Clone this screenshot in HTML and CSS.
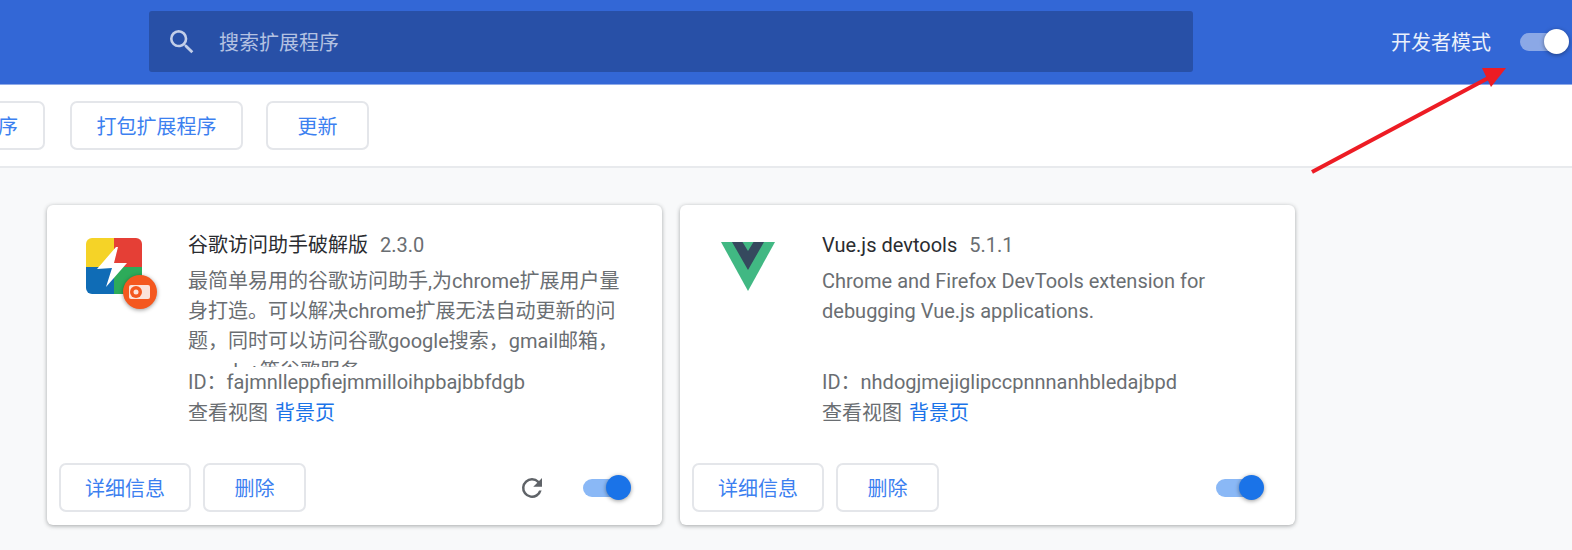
FILE: index.html
```html
<!DOCTYPE html>
<html lang="zh">
<head>
<meta charset="utf-8">
<title>扩展程序</title>
<link rel="stylesheet" href="styles.css">
</head>
<body>
<header class="top">
  <div class="search">
    <svg class="search-icon" viewBox="0 0 24 24" width="32" height="32"><path fill="currentColor" d="M15.5 14h-.79l-.28-.27A6.47 6.47 0 0 0 16 9.5 6.5 6.5 0 1 0 9.5 16c1.61 0 3.09-.59 4.23-1.57l.27.28v.79l5 4.99L20.49 19l-4.99-5zm-6 0C7.01 14 5 11.99 5 9.5S7.01 5 9.5 5 14 7.01 14 9.5 11.99 14 9.5 14z"/></svg>
    <span class="search-text">搜索扩展程序</span>
  </div>
  <div class="dev">
    <span class="dev-label">开发者模式</span>
    <span class="toggle toggle-dev"><span class="knob knob-dev"></span></span>
  </div>
</header>
<nav class="tools">
  <button class="btn btn-cut">加载已解压的扩展程序</button>
  <button class="btn btn-pack">打包扩展程序</button>
  <button class="btn btn-update">更新</button>
</nav>
<main class="cards">
  <article class="card">
    <div class="card-main">
      <div class="icon-col">
        <svg class="ext-icon" viewBox="0 0 74 64" width="74" height="64">
          <defs><clipPath id="rr"><rect x="0" y="0" width="56" height="56" rx="6"/></clipPath></defs>
          <g clip-path="url(#rr)">
            <rect x="0" y="0" width="28" height="29" fill="#f5d327"/>
            <rect x="28" y="0" width="28" height="29" fill="#e53f36"/>
            <rect x="0" y="29" width="28" height="27" fill="#0f6cb6"/>
            <rect x="28" y="29" width="28" height="27" fill="#2dab5a"/>
            <path fill="#fff" d="M30 9 L11 31 L26 30 L20 49 L41 25 L28 25 L32 9 Z"/>
          </g>
          <circle class="badge" cx="54" cy="54" r="17" fill="#f4581f"/>
          <rect x="43" y="47" width="21" height="14" rx="2" fill="#fbe3da"/>
          <circle cx="50" cy="54" r="6" fill="#f4581f"/>
          <circle cx="50" cy="54" r="2.500" fill="#fbe3da"/>
        </svg>
      </div>
      <div class="info">
        <div class="title-row"><span class="name">谷歌访问助手破解版</span><span class="version">2.3.0</span></div>
        <p class="desc">最简单易用的谷歌访问助手,为chrome扩展用户量身打造。可以解决chrome扩展无法自动更新的问题，同时可以访问谷歌google搜索，gmail邮箱，google+等谷歌服务</p>
        <div class="line">ID：fajmnlleppfiejmmilloihpbajbbfdgb</div>
        <div class="line">查看视图<a class="link">背景页</a></div>
      </div>
    </div>
    <div class="actions">
      <button class="btn btn-detail">详细信息</button>
      <button class="btn btn-del">删除</button>
      <svg class="reload" viewBox="0 0 24 24" width="30" height="30"><path fill="#5f6368" d="M17.65 6.35A7.96 7.96 0 0 0 12 4a8 8 0 1 0 7.73 10h-2.08A6 6 0 1 1 12 6c1.66 0 3.14.69 4.22 1.78L13 11h7V4l-2.35 2.35z"/></svg>
      <span class="toggle toggle-on"><span class="knob knob-on"></span></span>
    </div>
  </article>
  <article class="card">
    <div class="card-main">
      <div class="icon-col">
        <svg class="ext-icon vue-icon" viewBox="0 0 54 49" width="54" height="49">
          <path fill="#41b883" d="M0 0h54L27 49z"/>
          <path fill="#35495e" d="M11 0h10.500L27 9l5.500-9H43L27 28z"/>
        </svg>
      </div>
      <div class="info">
        <div class="title-row"><span class="name">Vue.js devtools</span><span class="version">5.1.1</span></div>
        <p class="desc">Chrome and Firefox DevTools extension for debugging Vue.js applications.</p>
        <div class="line">ID：nhdogjmejiglipccpnnnanhbledajbpd</div>
        <div class="line">查看视图<a class="link">背景页</a></div>
      </div>
    </div>
    <div class="actions">
      <button class="btn btn-detail">详细信息</button>
      <button class="btn btn-del">删除</button>
      <span class="toggle toggle-on"><span class="knob knob-on"></span></span>
    </div>
  </article>
</main>
<svg class="arrow" viewBox="0 0 1572 550" width="1572" height="550">
  <path d="M1312 172 L1492 76" stroke="#ed1c24" stroke-width="4" fill="none"/>
  <path d="M1482 68 L1506 68 L1491 87 Z" fill="#ed1c24"/>
</svg>
</body>
</html>
```
FILE: styles.css
```css
* { box-sizing: border-box; }
html, body { margin: 0; padding: 0; }
body {
  width: 1572px;
  height: 550px;
  overflow: hidden;
  position: relative;
  background: #f8f9fa;
  font-family: Roboto, "Noto Sans CJK SC", sans-serif;
  font-size: 20px;
  color: #6a6e72;
}
.top {
  height: 85px;
  background: #3367d6;
  border-bottom: 1px solid #8faae8;
  display: flex;
  align-items: flex-start;
  padding: 11px 0 0 149px;
}
.search {
  width: 1044px;
  height: 61px;
  background: #2850a7;
  border-radius: 3px;
  display: flex;
  align-items: center;
  padding-left: 17px;
  color: #b4c2e2;
}
.search-icon { flex: none; color: #c3cfe9; }
.search-text { margin-left: 21px; font-size: 20px; }
.dev {
  margin-left: 198px;
  height: 61px;
  display: flex;
  align-items: center;
  color: #eaf0fb;
  font-size: 20px;
}
.toggle {
  display: block;
  position: relative;
  width: 46px;
  height: 18px;
  border-radius: 9px;
  flex: none;
}
.toggle-dev { width: 47px; margin-left: 29px; background: #8ba8e6; }
.toggle-on { background: #8ab8f6; }
.knob {
  position: absolute;
  top: -4px;
  right: -2px;
  width: 25px;
  height: 25px;
  border-radius: 50%;
  box-shadow: 0 1px 4px rgba(0,0,0,.4);
}
.knob-dev { background: #fff; }
.knob-on { background: #1a73e8; }
.tools {
  height: 83px;
  background: #fff;
  border-bottom: 2px solid #e8eaed;
  display: flex;
  align-items: center;
  gap: 25px;
  margin-left: -158px;
}
.btn {
  flex: none;
  height: 49px;
  background: #fff;
  border: 2px solid #e4e6ea;
  border-radius: 7px;
  color: #3c80f0;
  font-family: inherit;
  font-size: 20px;
  padding: 0;
  white-space: nowrap;
}
.btn-cut { width: 203px; overflow: hidden; direction: rtl; padding-right: 25px; }
.btn-pack { width: 173px; }
.btn-update { width: 103px; margin-left: -2px; }
.cards {
  display: grid;
  grid-template-columns: 615px 615px;
  gap: 18px;
  padding: 37px 0 0 47px;
}
.card {
  height: 320px;
  background: #fff;
  border-radius: 6px;
  box-shadow: 0 1px 4px rgba(60,64,67,.45);
  display: flex;
  flex-direction: column;
  justify-content: space-between;
  padding-bottom: 13px;
}
.card-main { display: flex; padding-top: 25px; }
.icon-col { width: 142px; flex: none; padding: 8px 0 0 40px; }
.card:first-child .icon-col { width: 141px; padding-left: 39px; }
.vue-icon { margin: 4px 0 0 1px; display: block; }
.badge { filter: drop-shadow(0 1px 2px rgba(0,0,0,.4)); }
.ext-icon { overflow: visible; }
.info { width: 440px; flex: none; }
.title-row { height: 30px; line-height: 30px; }
.name { color: #2a2c30; }
.version { margin-left: 12px; }
.desc {
  margin: 6px 0 0;
  height: 101px;
  line-height: 30px;
  overflow: hidden;
}
.line { height: 30px; line-height: 30px; white-space: nowrap; }
.line + .line { margin-top: 1px; }
.link { color: #1a73e8; margin-left: 7px; }
.actions {
  display: flex;
  align-items: center;
  padding: 0 33px 0 12px;
}
.btn-detail { width: 132px; }
.btn-del { width: 103px; margin-left: 12px; }
.reload { margin-left: auto; flex: none; margin-right: 36px; }
.btn-del + .toggle { margin-left: auto; }
.arrow { position: absolute; left: 0; top: 0; pointer-events: none; }
```
